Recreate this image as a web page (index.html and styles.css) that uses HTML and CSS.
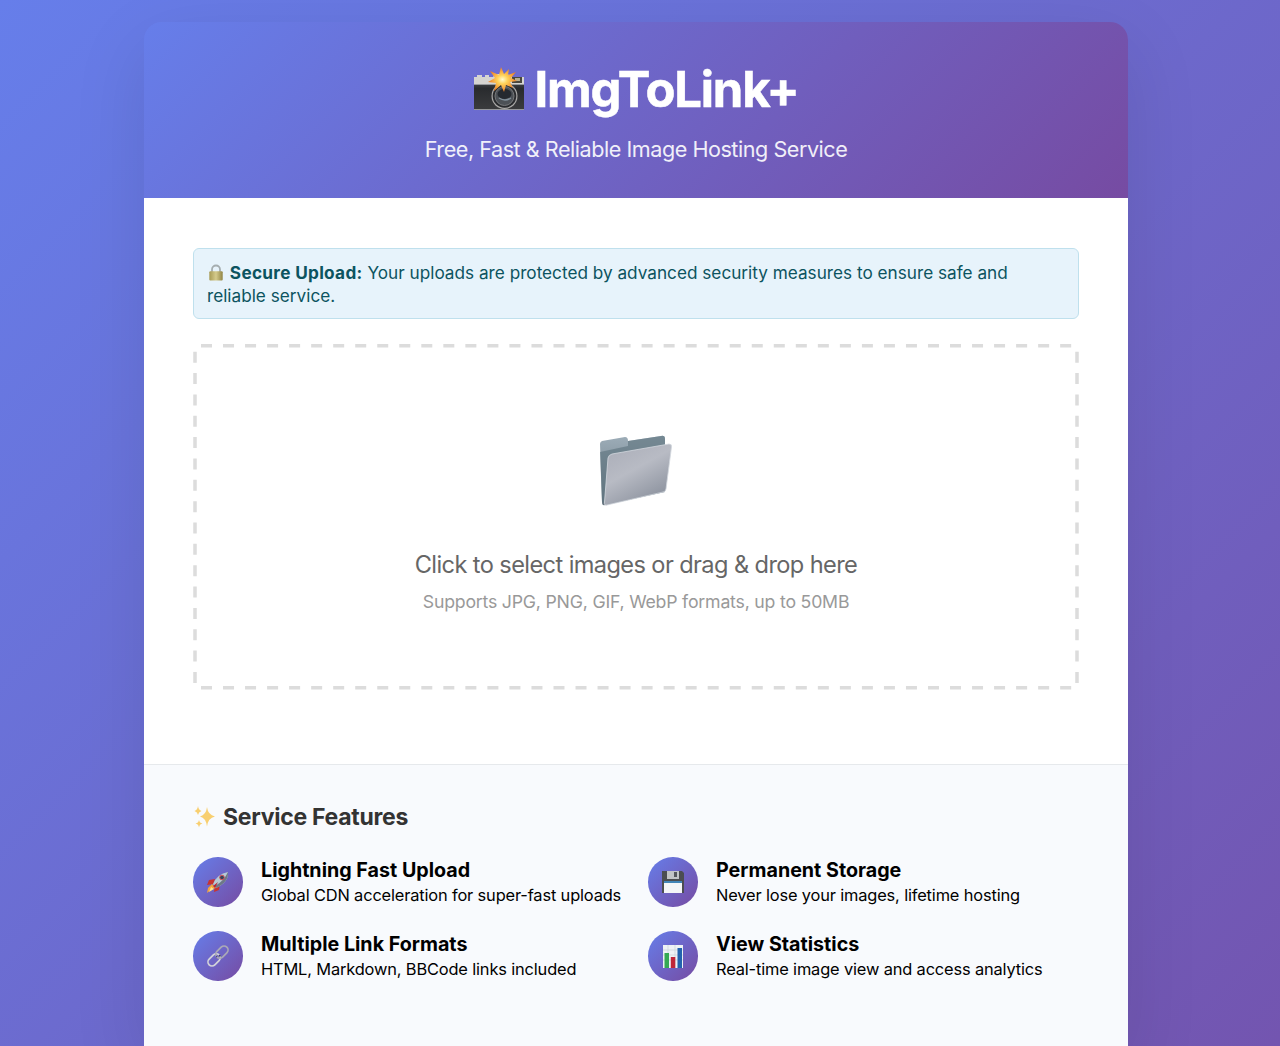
FILE: index.html
```html
<!DOCTYPE html>
<html lang="en">
<head>
<meta charset="utf-8">
<title>ImgToLink+</title>
<link rel="stylesheet" href="styles.css">
</head>
<body>
<svg class="defs" width="0" height="0" aria-hidden="true">
  <defs>
    <linearGradient id="brass"><stop stop-color="#a79b55"/><stop offset=".5" stop-color="#d5cb8c"/><stop offset="1" stop-color="#918545"/></linearGradient>
    <linearGradient id="back" x2="0" y2="1"><stop stop-color="#9dadb8"/><stop offset="1" stop-color="#65747f"/></linearGradient>
    <linearGradient id="front" x2=".6" y2="1"><stop stop-color="#a9acb7"/><stop offset=".5" stop-color="#b8bbc4"/><stop offset="1" stop-color="#8d939f"/></linearGradient>
    <linearGradient id="body" x2="0" y2="1"><stop stop-color="#55575a"/><stop offset=".3" stop-color="#292b2e"/><stop offset="1" stop-color="#3b3c3e"/></linearGradient>
    <radialGradient id="flash"><stop stop-color="#fffbd0"/><stop offset=".35" stop-color="#ffd35b"/><stop offset="1" stop-color="#ed7b24"/></radialGradient>
  </defs>
</svg>
<main class="card">
  <header class="header">
    <h1 class="brand">
      <svg class="camera" viewBox="0 0 52 46">
        <path d="M1 12h50v31H1z" fill="url(#body)"/>
        <path d="M1 10h3V8h5v2h3V8h4v2h4l2-3h13l2 3h14v8H1z" fill="#d5d4d1"/>
        <path d="M1 17h50v1H1zM1 42h50v1H1z" fill="#96989b"/>
        <path d="M39 10h10v6H39z" fill="#49473e"/><path d="M42 11h5v3h-5z" fill="#b5ae91"/>
        <circle cx="31.500" cy="29" r="13" fill="#aaa9a7"/><circle cx="31.500" cy="29" r="11.800" fill="#292b2e"/>
        <circle cx="31.500" cy="29" r="9.500" fill="#4c5156" stroke="#77797b"/><ellipse cx="31.500" cy="27" rx="7" ry="5" fill="#252a30"/>
        <path d="M26 31q6 4 12 0" fill="none" stroke="#82909a" stroke-width="1.500"/>
        <path d="M28 0L31 7L36 2L35 8L43 5L38 11L44 14L37 15L40 21L33 18L31 25L28 18L21 24L23 16L15 15L22 11L17 4L26 8Z" fill="url(#flash)"/>
      </svg>
      <span class="brand-name">ImgToLink+</span>
    </h1>
    <p class="tagline">Free, Fast &amp; Reliable Image Hosting Service</p>
  </header>
  <section class="upload">
    <p class="notice">
      <svg class="lock" viewBox="0 0 18 18"><path d="M5 8V5.500a4 4 0 0 1 8 0V8" fill="none" stroke="#a5adaf" stroke-width="1.800"/><rect x="2.300" y="7.200" width="13.400" height="9.300" rx="1" fill="url(#brass)"/></svg>
      <strong>Secure Upload:</strong> Your uploads are protected by advanced security measures to ensure safe and<br>reliable service.
    </p>
    <div class="dropzone">
      <svg class="outline" viewBox="0 0 886 346" fill="none" stroke="#dcdcdc" stroke-width="3.500">
        <path d="M8 1.800H879M8 343.800H879" stroke-dasharray="11 11.030"/>
        <path d="M2 7.700V339M884 7.700V339" stroke-dasharray="11 10.350"/>
      </svg>
      <svg class="folder" viewBox="0 0 74 74">
        <path d="M1 10q0-2 2-3l23-4q3 0 3 4l33-5q4-1 4 3v53L6 71q-3 1-3-3z" fill="url(#back)"/>
        <path d="M29 7l33-5q4-1 4 3v8L12 22 6 69 3 68 1 18l28-6z" fill="#5f7480" opacity=".65"/>
        <path d="M13 20l57-10q3 0 2.500 3L67 55q-.5 3-3 3L8 71q-3 1-2.500-3L9 24q.5-3 4-4z" fill="url(#front)" stroke="#d3d8de" stroke-width=".8"/>
      </svg>
      <p class="drop-title">Click to select images or drag &amp; drop here</p>
      <p class="drop-hint">Supports JPG, PNG, GIF, WebP formats, up to 50MB</p>
    </div>
  </section>
  <section class="features">
    <h2 class="features-title">
      <svg class="sparkles" viewBox="0 0 24 24" fill="#f8cf70"><path d="M14 2q1 8 8 9.500-7 1.500-8 10-1-8.500-7-10 6-1.500 7-9.500zM5 1q.5 4 3.500 5-3 .8-3.500 4-.5-3.200-3.500-4 3-1 3.500-5zM6 15q.5 3 3.500 3.500-3 .5-3.500 4-.5-3.500-3.500-4 3-.5 3.500-3.500z"/></svg>
      <span>Service Features</span>
    </h2>
    <div class="grid">
      <article class="feature">
        <div class="badge"><svg viewBox="0 0 24 24"><path d="M9 9L3 10l-2 5 7-1zM14 14l-1 6-5 2 1-7z" fill="#c73332"/><path d="M6 14l4 4-4 1-5 4 1-5z" fill="#f6a43b"/><path d="M5 17l3 2-5 3z" fill="#ffe38b"/><path d="M7 14Q11 4 22 2q1 10-12 16z" fill="#b7c9d4"/><path d="M9 16Q18 11 22 2q1 10-12 16z" fill="#6d7888"/><circle cx="16" cy="7.500" r="2.300" fill="#34445c" stroke="#d5525a"/><path d="M7 16l5-4-3 6z" fill="#b52936"/></svg></div>
        <div><h3>Lightning Fast Upload</h3><p>Global CDN acceleration for super-fast uploads</p></div>
      </article>
      <article class="feature">
        <div class="badge"><svg viewBox="0 0 24 24"><path d="M1 1h20l2 2v20H1z" fill="#4b4d51"/><path d="M6 1h12v8H6z" fill="#c1c4c7"/><path d="M13 2h3v5h-3z" fill="#55585d"/><path d="M3 12h18v11H3z" fill="#f4f5f7"/><path d="M3 11h18v2H3z" fill="#4285b7"/></svg></div>
        <div><h3>Permanent Storage</h3><p>Never lose your images, lifetime hosting</p></div>
      </article>
      <article class="feature">
        <div class="badge"><svg viewBox="0 0 24 24" fill="none"><g transform="rotate(-45 12 12)"><rect x="-.5" y="8" width="14" height="8" rx="4" stroke="#d2d3d9" stroke-width="1.700"/><rect x="10.500" y="8" width="14" height="8" rx="4" stroke="#aaa9b6" stroke-width="1.700"/><path d="M10.500 12v-1M13.500 12v2" stroke="#3d3c66" stroke-width="1.500"/></g></svg></div>
        <div><h3>Multiple Link Formats</h3><p>HTML, Markdown, BBCode links included</p></div>
      </article>
      <article class="feature">
        <div class="badge"><svg viewBox="0 0 24 24"><path d="M2 1h20v23H2z" fill="#edf2f5"/><path d="M2 6h20M2 11h20M2 16h20M7 1v23M14 1v23" stroke="#cad4d9" stroke-width=".7"/><path d="M3.500 9H8v15H3.500z" fill="#35a853"/><path d="M9.800 13h4.500v11H9.800z" fill="#bf2638"/><path d="M16.500 4H21v20h-4.500z" fill="#2263ae"/></svg></div>
        <div><h3>View Statistics</h3><p>Real-time image view and access analytics</p></div>
      </article>
    </div>
  </section>
</main>
</body>
</html>
```
FILE: styles.css
```css
* { box-sizing: border-box; }
html { height: 1046px; overflow: hidden; }
body {
  margin: 0; padding: 22px 144px 0; height: 1046px; overflow: hidden;
  background: linear-gradient(135deg, #667eea 0%, #764ba2 100%) 0 0 / 1280px 1600px no-repeat;
  font-family: Inter, "Liberation Sans", sans-serif;
}
h1, h2, h3, p { margin: 0; }
.defs { display: block; }
.card { width: 984px; height: 1024px; overflow: hidden; border-radius: 18px 18px 0 0; box-shadow: 0 25px 74px rgba(0,0,0,.1); }
.header { height: 176px; padding-top: 38px; color: #fff; text-align: center; background: linear-gradient(135deg, #667eea 0%, #764ba2 100%); }
.brand { display: flex; align-items: center; justify-content: center; gap: 9px; height: 60px; font-size: 49px; line-height: 60px; letter-spacing: -1.2px; }
.brand-name { -webkit-text-stroke: .5px #fff; }
.camera { width: 52px; height: 46px; }
.tagline { margin-top: 16px; font-size: 21.6px; line-height: 26px; letter-spacing: -.47px; opacity: .9; }
.upload { height: 567px; padding: 50px 49px 0; background: #fff; border-bottom: 1px solid #e6e9ec; }
.notice { height: 71px; padding: 12px 13px; color: #0c5460; background: #e7f3fb; border: 1px solid #bfe0ed; border-radius: 6px; font-size: 17.2px; line-height: 23px; }
.notice strong { letter-spacing: .3px; }
.lock { width: 18px; height: 18px; vertical-align: -3px; }
.dropzone { position: relative; margin-top: 25px; height: 346px; text-align: center; padding-top: 90px; }
.outline { position: absolute; inset: 0; width: 886px; height: 346px; }
.folder { display: block; width: 74px; height: 74px; margin: 0 auto; }
.drop-title { margin-top: 42px; font-size: 23.6px; line-height: 30px; letter-spacing: -.6px; color: #666; }
.drop-hint { margin-top: 12px; font-size: 17.7px; line-height: 20px; letter-spacing: -.2px; color: #999; }
.features { height: 281px; padding: 37px 49px 0; background: #f8fafd; }
.features-title { display: flex; align-items: center; gap: 6px; font-size: 23px; line-height: 30px; letter-spacing: -.27px; color: #333; }
.sparkles { width: 24px; height: 24px; }
.grid { display: grid; grid-template-columns: 430px 430px; column-gap: 25px; row-gap: 24px; margin-top: 25px; }
.feature { display: flex; align-items: center; gap: 18.5px; height: 50px; white-space: nowrap; color: #000; }
.badge { display: grid; flex: none; place-items: center; width: 49.5px; height: 49.5px; border-radius: 50%; background: linear-gradient(135deg, #667eea, #764ba2); }
.badge svg { width: 24px; height: 24px; }
.feature h3 { font-size: 19.7px; line-height: 25px; }
.feature p { font-size: 16.4px; line-height: 24px; letter-spacing: -.15px; }
```
